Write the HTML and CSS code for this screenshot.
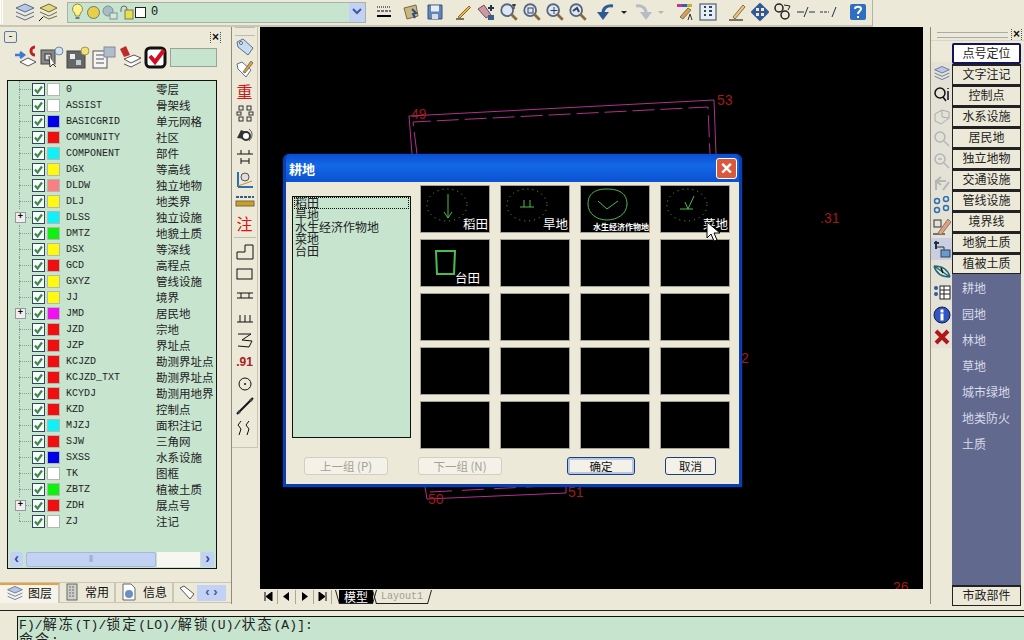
FILE: index.html
```html
<!DOCTYPE html>
<html lang="zh-CN">
<head>
    <meta charset="UTF-8">
    <title>耕地</title>
    <link rel="stylesheet" href="styles.css">
</head>
<body>
    <svg class="defs" width="0" height="0">
        <symbol id="i-check" viewBox="0 0 13 13"><path d="M3 6.5l2.5 3L10 3.5" fill="none" stroke="#3d8a4e" stroke-width="2.2"/></symbol>
        <symbol id="i-layers" viewBox="0 0 22 22"><path d="M2 7l9-4 9 4-9 4z" fill="#b9c7e6" stroke="#5a6a90"/><path d="M2 11l9 4 9-4M2 15l9 4 9-4" fill="none" stroke="#5a6a90"/></symbol>
        <symbol id="i-lens" viewBox="0 0 22 22"><circle cx="9" cy="9" r="6.5" fill="#dfe7f4" stroke="#56657f" stroke-width="2"/><path d="M13.5 13.5l6 6" stroke="#8a6a3a" stroke-width="3"/></symbol>
    </svg>

    <div class="toolbar">
        <div class="grip"></div>
        <span class="tb"><svg width="22" height="22"><use href="#i-layers"/></svg></span>
        <span class="tb"><svg width="22" height="22" viewBox="0 0 22 22"><path d="M3 7l9-4 8 4-8 4z" fill="#e6d77c" stroke="#6b6a3a"/><path d="M3 11l9 4 8-4M6 15l6 3 8-3" fill="none" stroke="#6b6a3a"/><path d="M2 20l4-4" stroke="#000"/></svg></span>
        <div class="combo">
            <svg width="15" height="18" viewBox="0 0 15 18"><path d="M7.5 1a5 5 0 0 0-3 9l1 3h4l1-3a5 5 0 0 0-3-9z" fill="#fff38a" stroke="#8a8a50"/><path d="M5.5 15h4" stroke="#777" stroke-width="2"/></svg>
            <svg width="15" height="15" viewBox="0 0 15 15"><circle cx="7.5" cy="7.5" r="6" fill="#e8cf45" stroke="#777"/></svg>
            <svg width="16" height="15" viewBox="0 0 16 15"><circle cx="6" cy="6" r="5" fill="#a9bcc4" stroke="#7f919a"/><rect x="8" y="8" width="7" height="6" fill="#d6e6df" stroke="#7f919a"/></svg>
            <svg width="15" height="15" viewBox="0 0 15 15"><path d="M2 7V4a3 3 0 0 1 6 0v3" fill="none" stroke="#666"/><rect x="6" y="5" width="8" height="9" fill="#e8e045" stroke="#777"/></svg>
            <span class="combo-swatch"></span>
            <span class="combo-text">0</span>
            <span class="combo-btn"><svg width="12" height="8" viewBox="0 0 12 8"><path d="M2 1l4 4 4-4" fill="none" stroke="#3b5aa0" stroke-width="2"/></svg></span>
        </div>
        <span class="tb"><svg width="18" height="14" viewBox="0 0 18 14"><path d="M2 2h14" stroke="#000" stroke-dasharray="1 1"/><path d="M2 6h14" stroke="#000" stroke-dasharray="3 1"/><path d="M2 11h14" stroke="#000" stroke-width="2"/></svg></span>
        <span class="tb tb-first"><svg width="20" height="20" viewBox="0 0 20 20"><path d="M2 6l12-3 2 11-11 3z" fill="#c8b880" stroke="#776a40"/><path d="M10 7l4 4-3 1 2 4" fill="none" stroke="#2d4d80" stroke-width="2"/></svg></span>
        <span class="tb"><svg width="18" height="18" viewBox="0 0 18 18"><path d="M2 2h14v14H2z" fill="#5f86b8" stroke="#39507a"/><rect x="5" y="2.500" width="8" height="6" fill="#e9eef5"/><rect x="6" y="11" width="6" height="5" fill="#d8dde5"/></svg></span>
        <span class="tb tb-first"><svg width="20" height="20" viewBox="0 0 20 20"><path d="M3 17h8" stroke="#000"/><path d="M5 15L16 4l1.500 1.500L7 16z" fill="#e2b94a" stroke="#8a6a20"/></svg></span>
        <span class="tb"><svg width="20" height="20" viewBox="0 0 20 20"><path d="M2 7l8 9 5-3-7-10z" fill="#c99aa4" stroke="#7a4a55"/><path d="M15 3v6M12 6h6" stroke="#234" stroke-width="2"/><rect x="12" y="13" width="6" height="5" fill="#3a5f8a"/></svg></span>
        <span class="tb"><svg width="20" height="20"><use href="#i-lens"/><path d="M15 2v5M13 3h4" stroke="#000"/></svg></span>
        <span class="tb"><svg width="20" height="20"><use href="#i-lens"/><rect x="6" y="6" width="5" height="5" fill="none" stroke="#345"/></svg></span>
        <span class="tb"><svg width="20" height="20"><use href="#i-lens"/><path d="M9 5v7M5.500 8.500h7" stroke="#345"/></svg></span>
        <span class="tb"><svg width="20" height="20"><use href="#i-lens"/><path d="M5 9l4-3 2 4" fill="none" stroke="#345" stroke-width="2"/></svg></span>
        <span class="tb tb-first"><svg width="20" height="20" viewBox="0 0 20 20"><path d="M7 11C7 6 11 3 17 4" fill="none" stroke="#2f5a96" stroke-width="3"/><path d="M1 10h12l-6 8z" fill="#2f5a96"/></svg></span>
        <span class="tb-drop"></span>
        <span class="tb"><svg width="20" height="20" viewBox="0 0 20 20"><path d="M13 11C13 6 9 3 3 4" fill="none" stroke="#b6bcc4" stroke-width="3"/><path d="M19 10H7l6 8z" fill="#b6bcc4"/></svg></span>
        <span class="tb-drop tb-drop-off"></span>
        <span class="tb tb-first"><svg width="20" height="20" viewBox="0 0 20 20"><rect x="2" y="2" width="5" height="3" fill="#c03a8a"/><rect x="7" y="2" width="5" height="3" fill="#3a5ac0"/><rect x="12" y="2" width="5" height="3" fill="#c8b030"/><path d="M5 15l8-9 3 2-8 9z" fill="#d8a050" stroke="#775"/><path d="M13 18l2-6 2 6" fill="none" stroke="#333"/></svg></span>
        <span class="tb"><svg width="18" height="18" viewBox="0 0 18 18"><rect x="1" y="1" width="16" height="16" fill="#e8eef5" stroke="#345"/><path d="M5 4h2M10 4h3M5 8h2M10 8h3M5 12h2M10 12h3" stroke="#345" stroke-width="2"/></svg></span>
        <span class="tb tb-wide"><svg width="20" height="20" viewBox="0 0 20 20"><path d="M2 18h14" stroke="#000"/><path d="M6 15L16 3l2 2L8 17z" fill="#e6c68a" stroke="#8a7040"/></svg></span>
        <span class="tb"><svg width="18" height="18" viewBox="0 0 18 18"><path d="M9 1v16M1 9h16M9 1L6 4h6zM9 17l-3-3h6zM1 9l3-3v6zM17 9l-3-3v6z" stroke="#2f5a96" fill="#2f5a96" stroke-width="2"/></svg></span>
        <span class="tb"><svg width="20" height="20" viewBox="0 0 20 20"><circle cx="6" cy="6" r="4" fill="none" stroke="#222" stroke-width="1.500"/><circle cx="12" cy="13" r="4" fill="none" stroke="#222" stroke-width="1.500"/><path d="M11 3l6 1-2 4" fill="none" stroke="#222"/></svg></span>
        <span class="tb"><svg width="20" height="14" viewBox="0 0 20 14"><path d="M1 7h7M13 7h6" stroke="#234"/><path d="M8 12l4-10" stroke="#234"/></svg></span>
        <span class="tb"><svg width="20" height="14" viewBox="0 0 20 14"><path d="M1 7h9" stroke="#234" stroke-dasharray="3 1"/><path d="M13 12l4-10" stroke="#234"/></svg></span>
        <span class="tb tb-wide"><svg width="18" height="18" viewBox="0 0 18 18"><rect x="1" y="1" width="16" height="16" rx="2" fill="#2f6fc0"/><path d="M6 6c0-3 6-3 6 0 0 2-3 2-3 5M9 13v2" fill="none" stroke="#fff" stroke-width="2"/></svg></span>
    </div>

    <div class="main">
        <aside class="palette">
            <div class="palette-title">
                <span class="mini-btn">-</span>
                <span class="close-x">×</span>
            </div>
            <div class="palette-tools">
                <svg width="24" height="24" viewBox="0 0 24 24"><path d="M1 10h8M6 7l4 3-4 3" stroke="#3a7ad0" stroke-width="2.500" fill="none"/><path d="M6 17l8-4 8 4-8 4z" fill="#fff" stroke="#555"/><path d="M21 2a4 4 0 1 0 0 8" fill="none" stroke="#c02020" stroke-width="3"/></svg>
                <svg width="24" height="24" viewBox="0 0 24 24"><rect x="1" y="5" width="14" height="14" fill="#888" stroke="#444"/><rect x="5" y="9" width="6" height="6" fill="#ddd" stroke="#333"/><path d="M9 11l1 11 3-3 3 3" fill="#fff" stroke="#333"/><circle cx="19" cy="6" r="4" fill="#cfe2f8" stroke="#789"/></svg>
                <svg width="24" height="24" viewBox="0 0 24 24"><rect x="1" y="6" width="18" height="17" fill="#666" stroke="#444"/><rect x="4" y="9" width="5" height="5" fill="#eee"/><rect x="10" y="15" width="5" height="5" fill="#bcd"/><circle cx="19" cy="6" r="4" fill="#f4e26a" stroke="#997"/></svg>
                <svg width="24" height="24" viewBox="0 0 24 24"><rect x="1" y="6" width="14" height="17" fill="#f4f4f4" stroke="#555"/><path d="M4 10h8M4 14h8M4 18h8" stroke="#555"/><rect x="12" y="2" width="11" height="10" fill="#aebccc" stroke="#889"/></svg>
                <svg width="24" height="24" viewBox="0 0 24 24"><path d="M2 4l6-3 4 9-6 2z" fill="#c02a2a"/><path d="M6 14l10-4 7 3-10 5zM6 19l7 3 10-5" fill="#fff" stroke="#555"/></svg>
                <svg width="24" height="24" viewBox="0 0 24 24"><rect x="2" y="3" width="19" height="19" rx="4" fill="#fff" stroke="#111" stroke-width="3"/><path d="M6 11l5 6 9-12" fill="none" stroke="#d01020" stroke-width="4"/></svg>
                <span class="palette-input"></span>
            </div>
            <div class="layer-box">
                <div class="layer-list">
                    <div class="layer"><span class="tree"></span><span class="chk"><svg width="13" height="13"><use href="#i-check"/></svg></span><span class="sw c-white"></span><span class="name">0</span><span class="desc">零层</span></div>
                    <div class="layer"><span class="tree"></span><span class="chk"><svg width="13" height="13"><use href="#i-check"/></svg></span><span class="sw c-white"></span><span class="name">ASSIST</span><span class="desc">骨架线</span></div>
                    <div class="layer"><span class="tree"></span><span class="chk"><svg width="13" height="13"><use href="#i-check"/></svg></span><span class="sw c-blue"></span><span class="name">BASICGRID</span><span class="desc">单元网格</span></div>
                    <div class="layer"><span class="tree"></span><span class="chk"><svg width="13" height="13"><use href="#i-check"/></svg></span><span class="sw c-red"></span><span class="name">COMMUNITY</span><span class="desc">社区</span></div>
                    <div class="layer"><span class="tree"></span><span class="chk"><svg width="13" height="13"><use href="#i-check"/></svg></span><span class="sw c-cyan"></span><span class="name">COMPONENT</span><span class="desc">部件</span></div>
                    <div class="layer"><span class="tree"></span><span class="chk"><svg width="13" height="13"><use href="#i-check"/></svg></span><span class="sw c-yellow"></span><span class="name">DGX</span><span class="desc">等高线</span></div>
                    <div class="layer"><span class="tree"></span><span class="chk"><svg width="13" height="13"><use href="#i-check"/></svg></span><span class="sw c-pink"></span><span class="name">DLDW</span><span class="desc">独立地物</span></div>
                    <div class="layer"><span class="tree"></span><span class="chk"><svg width="13" height="13"><use href="#i-check"/></svg></span><span class="sw c-yellow"></span><span class="name">DLJ</span><span class="desc">地类界</span></div>
                    <div class="layer"><span class="tree tree-plus"></span><span class="chk"><svg width="13" height="13"><use href="#i-check"/></svg></span><span class="sw c-cyan"></span><span class="name">DLSS</span><span class="desc">独立设施</span></div>
                    <div class="layer"><span class="tree"></span><span class="chk"><svg width="13" height="13"><use href="#i-check"/></svg></span><span class="sw c-green"></span><span class="name">DMTZ</span><span class="desc">地貌土质</span></div>
                    <div class="layer"><span class="tree"></span><span class="chk"><svg width="13" height="13"><use href="#i-check"/></svg></span><span class="sw c-yellow"></span><span class="name">DSX</span><span class="desc">等深线</span></div>
                    <div class="layer"><span class="tree"></span><span class="chk"><svg width="13" height="13"><use href="#i-check"/></svg></span><span class="sw c-red"></span><span class="name">GCD</span><span class="desc">高程点</span></div>
                    <div class="layer"><span class="tree"></span><span class="chk"><svg width="13" height="13"><use href="#i-check"/></svg></span><span class="sw c-yellow"></span><span class="name">GXYZ</span><span class="desc">管线设施</span></div>
                    <div class="layer"><span class="tree"></span><span class="chk"><svg width="13" height="13"><use href="#i-check"/></svg></span><span class="sw c-yellow"></span><span class="name">JJ</span><span class="desc">境界</span></div>
                    <div class="layer"><span class="tree tree-plus"></span><span class="chk"><svg width="13" height="13"><use href="#i-check"/></svg></span><span class="sw c-magenta"></span><span class="name">JMD</span><span class="desc">居民地</span></div>
                    <div class="layer"><span class="tree"></span><span class="chk"><svg width="13" height="13"><use href="#i-check"/></svg></span><span class="sw c-red"></span><span class="name">JZD</span><span class="desc">宗地</span></div>
                    <div class="layer"><span class="tree"></span><span class="chk"><svg width="13" height="13"><use href="#i-check"/></svg></span><span class="sw c-red"></span><span class="name">JZP</span><span class="desc">界址点</span></div>
                    <div class="layer"><span class="tree"></span><span class="chk"><svg width="13" height="13"><use href="#i-check"/></svg></span><span class="sw c-red"></span><span class="name">KCJZD</span><span class="desc">勘测界址点</span></div>
                    <div class="layer"><span class="tree"></span><span class="chk"><svg width="13" height="13"><use href="#i-check"/></svg></span><span class="sw c-red"></span><span class="name">KCJZD_TXT</span><span class="desc">勘测界址点</span></div>
                    <div class="layer"><span class="tree"></span><span class="chk"><svg width="13" height="13"><use href="#i-check"/></svg></span><span class="sw c-red"></span><span class="name">KCYDJ</span><span class="desc">勘测用地界</span></div>
                    <div class="layer"><span class="tree"></span><span class="chk"><svg width="13" height="13"><use href="#i-check"/></svg></span><span class="sw c-red"></span><span class="name">KZD</span><span class="desc">控制点</span></div>
                    <div class="layer"><span class="tree"></span><span class="chk"><svg width="13" height="13"><use href="#i-check"/></svg></span><span class="sw c-cyan"></span><span class="name">MJZJ</span><span class="desc">面积注记</span></div>
                    <div class="layer"><span class="tree"></span><span class="chk"><svg width="13" height="13"><use href="#i-check"/></svg></span><span class="sw c-red"></span><span class="name">SJW</span><span class="desc">三角网</span></div>
                    <div class="layer"><span class="tree"></span><span class="chk"><svg width="13" height="13"><use href="#i-check"/></svg></span><span class="sw c-blue"></span><span class="name">SXSS</span><span class="desc">水系设施</span></div>
                    <div class="layer"><span class="tree"></span><span class="chk"><svg width="13" height="13"><use href="#i-check"/></svg></span><span class="sw c-white"></span><span class="name">TK</span><span class="desc">图框</span></div>
                    <div class="layer"><span class="tree"></span><span class="chk"><svg width="13" height="13"><use href="#i-check"/></svg></span><span class="sw c-green"></span><span class="name">ZBTZ</span><span class="desc">植被土质</span></div>
                    <div class="layer"><span class="tree tree-plus"></span><span class="chk"><svg width="13" height="13"><use href="#i-check"/></svg></span><span class="sw c-red"></span><span class="name">ZDH</span><span class="desc">展点号</span></div>
                    <div class="layer"><span class="tree tree-last"></span><span class="chk"><svg width="13" height="13"><use href="#i-check"/></svg></span><span class="sw c-white"></span><span class="name">ZJ</span><span class="desc">注记</span></div>
                </div>
                <div class="hscroll">
                    <span class="sb-btn">‹</span>
                    <span class="sb-thumb">⦀</span>
                    <span class="sb-track"></span>
                    <span class="sb-btn">›</span>
                </div>
            </div>
            <div class="palette-tabs">
                <span class="ptab ptab-on"><svg width="20" height="18"><use href="#i-layers"/></svg>图层</span>
                <span class="ptab"><svg width="14" height="18" viewBox="0 0 14 18"><rect x="2" y="1" width="10" height="16" fill="#cfcfc8" stroke="#666"/><path d="M4 4h6M4 7h6M4 10h6M4 13h6" stroke="#666" stroke-dasharray="2 1"/></svg>常用</span>
                <span class="ptab ptab-info"><svg width="16" height="18" viewBox="0 0 16 18"><path d="M2 1h8l4 4v12H2z" fill="#fff" stroke="#666"/><circle cx="8" cy="11" r="4" fill="#6a90c0"/></svg>信息</span>
                <span class="ptab ptab-clip"><svg width="16" height="16" viewBox="0 0 16 16"><path d="M1 4l4-2 10 8-4 5z" fill="#fff" stroke="#555"/></svg></span>
                <span class="ptab-arrows">‹ ›</span>
            </div>
        </aside>

        <nav class="vtools">
            <span class="vgrip"></span>
            <span class="vt"><svg width="20" height="20" viewBox="0 0 20 20"><path d="M2 5l6-3 10 9-5 7L3 10z" fill="#c7dcf0" stroke="#5a7090"/><circle cx="6" cy="6" r="1.500" fill="#fff" stroke="#567"/></svg></span>
            <span class="vt"><svg width="20" height="20" viewBox="0 0 20 20"><path d="M2 5l5-2 9 8-5 7L3 10z" fill="#fff" stroke="#5a7090"/><path d="M8 13l8-11 2 2-8 10z" fill="#d8a040" stroke="#875"/></svg></span>
            <span class="vt vt-red">重</span>
            <span class="vt"><svg width="18" height="18" viewBox="0 0 18 18" fill="none" stroke="#333"><rect x="3" y="2" width="4" height="4"/><rect x="11" y="2" width="4" height="4"/><rect x="1" y="8" width="4" height="3"/><rect x="13" y="8" width="4" height="3"/><rect x="3" y="13" width="4" height="4"/><rect x="11" y="13" width="4" height="4"/></svg></span>
            <span class="vt"><svg width="20" height="18" viewBox="0 0 20 18"><path d="M2 12l4-8 5 2-1 7z" fill="#333"/><circle cx="11" cy="10" r="4" fill="#fff" stroke="#333" stroke-width="2"/><path d="M14 3c4 3 4 8 0 12" fill="none" stroke="#555"/></svg></span>
            <span class="vt"><svg width="18" height="16" viewBox="0 0 18 16" fill="none" stroke="#111"><path d="M1 5h16M5 1v4M13 1v4M5 9v6M13 9v6M5 12h8"/></svg></span>
            <span class="vt"><svg width="20" height="20" viewBox="0 0 20 20"><path d="M3 18V3M3 18h15" stroke="#2f6fa8" stroke-width="2" fill="none"/><circle cx="10" cy="8" r="4" fill="#ddd" stroke="#555"/><path d="M3 17l14-5" stroke="#c09030"/></svg></span>
            <span class="vt"><svg width="20" height="14" viewBox="0 0 20 14"><path d="M1 3h18" stroke="#3a5a8a" stroke-width="2" stroke-dasharray="3 1"/><rect x="1" y="7" width="18" height="5" fill="#c8a020" stroke="#765"/></svg></span>
            <span class="vt vt-red">注</span>
            <span class="vsep"></span>
            <span class="vt"><svg width="18" height="16" viewBox="0 0 18 16" fill="none" stroke="#111"><path d="M1 15V8h8V1h8v14z"/></svg></span>
            <span class="vt"><svg width="18" height="12" viewBox="0 0 18 12"><rect x="1" y="1" width="15" height="10" fill="none" stroke="#111"/></svg></span>
            <span class="vt"><svg width="18" height="12" viewBox="0 0 18 12" fill="none" stroke="#111"><path d="M1 3h16M1 8h16M5 3v5M13 3v5"/></svg></span>
            <span class="vt"><svg width="18" height="12" viewBox="0 0 18 12" fill="none" stroke="#111"><path d="M1 10h16M4 3v7M9 3v7M14 3v7"/></svg></span>
            <span class="vt"><svg width="18" height="18" viewBox="0 0 18 18" fill="none" stroke="#111"><path d="M2 3h13l-9 6 10 1-3 6-11-1"/></svg></span>
            <span class="vt vt-num">.91</span>
            <span class="vt"><svg width="16" height="16" viewBox="0 0 16 16"><circle cx="8" cy="8" r="6" fill="none" stroke="#111"/><circle cx="8" cy="8" r="1" fill="#111"/></svg></span>
            <span class="vt"><svg width="18" height="18" viewBox="0 0 18 18"><path d="M1 17L17 1" stroke="#111" stroke-width="2"/><circle cx="3" cy="15" r="1.500" fill="#345"/><circle cx="15" cy="3" r="1.500" fill="#345"/></svg></span>
            <span class="vt"><svg width="16" height="16" viewBox="0 0 16 16" fill="none" stroke="#111"><path d="M4 1L1 5l3 4-2 6M12 1L9 5l3 4-2 6"/></svg></span>
        </nav>

        <section class="center">
            <div class="canvas">
                <svg class="drawing" width="663" height="562" viewBox="260 27 663 562">
                    <path d="M412 154l-3-38 305-16 2 54" fill="none" stroke="#b03090"/>
                    <path d="M417 154l-4-32 295-15 2 47" fill="none" stroke="#b03090" stroke-dasharray="22 6"/>
                    <path d="M425 487l2 12 139-6v-6" fill="none" stroke="#b03090"/>
                    <path d="M430 492l136-7" fill="none" stroke="#b03090" stroke-dasharray="22 10"/>
                    <text x="411" y="119">49</text>
                    <text x="717" y="105">53</text>
                    <text x="820" y="223">.31</text>
                    <text x="741" y="363">2</text>
                    <text x="893" y="592">26</text>
                    <text x="428" y="504">50</text>
                    <text x="568" y="497">51</text>
                </svg>
                <div class="dialog">
                    <div class="dialog-title">
                        <span>耕地</span>
                        <span class="dialog-close">×</span>
                    </div>
                    <div class="dialog-body">
                        <div class="dialog-top">
                            <ul class="kind-list">
                                <li class="kind-on">稻田</li>
                                <li>旱地</li>
                                <li>水生经济作物地</li>
                                <li>菜地</li>
                                <li>台田</li>
                            </ul>
                            <div class="tiles">
                                <div class="tile">
                                    <svg width="68" height="46" viewBox="0 0 68 46" fill="none" stroke="#4cbc50"><ellipse cx="26" cy="19" rx="20" ry="16" stroke-dasharray="1 4"/><path d="M27 8v24M23 26l4 6 4-6"/></svg>
                                    <span class="tile-label">稻田</span>
                                </div>
                                <div class="tile">
                                    <svg width="68" height="46" viewBox="0 0 68 46" fill="none" stroke="#4cbc50"><ellipse cx="26" cy="19" rx="20" ry="16" stroke-dasharray="1 4"/><path d="M19 21h14M23 14v7M29 14v7"/></svg>
                                    <span class="tile-label">旱地</span>
                                </div>
                                <div class="tile">
                                    <svg width="68" height="46" viewBox="0 0 68 46" fill="none" stroke="#4cbc50"><path d="M7 18C7 5 18 3 26 3s20 2 20 15c0 10-10 16-20 16S7 28 7 18z"/><path d="M17 15l9 8 11-8"/></svg>
                                    <span class="tile-label tile-label-small">水生经济作物地</span>
                                </div>
                                <div class="tile">
                                    <svg width="68" height="46" viewBox="0 0 68 46" fill="none" stroke="#4cbc50"><ellipse cx="26" cy="19" rx="20" ry="16" stroke-dasharray="1 4"/><path d="M19 23h13M24 16l3 7 6-13"/></svg>
                                    <span class="tile-label">菜地</span>
                                </div>
                                <div class="tile">
                                    <svg width="68" height="46" viewBox="0 0 68 46" fill="none" stroke="#4cbc50" stroke-width="2"><path d="M15 11h19l-1 23H16z"/></svg>
                                    <span class="tile-label tile-label-left">台田</span>
                                </div>
                                <div class="tile"></div>
                                <div class="tile"></div>
                                <div class="tile"></div>
                                <div class="tile"></div>
                                <div class="tile"></div>
                                <div class="tile"></div>
                                <div class="tile"></div>
                                <div class="tile"></div>
                                <div class="tile"></div>
                                <div class="tile"></div>
                                <div class="tile"></div>
                                <div class="tile"></div>
                                <div class="tile"></div>
                                <div class="tile"></div>
                                <div class="tile"></div>
                            </div>
                        </div>
                        <div class="dialog-buttons">
                            <button class="dbtn dbtn-off dbtn-prev">上一组 (P)</button>
                            <button class="dbtn dbtn-off dbtn-next">下一组 (N)</button>
                            <button class="dbtn dbtn-ok">确定</button>
                            <button class="dbtn dbtn-cancel">取消</button>
                        </div>
                    </div>
                    <svg class="cursor" width="16" height="22" viewBox="0 0 16 22"><path d="M1 1v16l4-4 3 7 3-1-3-7h6z" fill="#fff" stroke="#000"/></svg>
                </div>
            </div>
            <div class="sheet-tabs">
                <span class="nav-btn"><svg width="9" height="9" viewBox="0 0 9 9"><path d="M1 0v9M8 0v9L2 4.500z" stroke="#000"/></svg></span>
                <span class="nav-btn"><svg width="9" height="9" viewBox="0 0 9 9"><path d="M7 0v9L1 4.500z"/></svg></span>
                <span class="nav-btn"><svg width="9" height="9" viewBox="0 0 9 9"><path d="M2 0v9l6-4.500z"/></svg></span>
                <span class="nav-btn"><svg width="9" height="9" viewBox="0 0 9 9"><path d="M8 0v9M1 0v9l6-4.500z" stroke="#000"/></svg></span>
                <span class="sheet sheet-on">模型</span>
                <span class="sheet">Layout1</span>
            </div>
        </section>

        <aside class="side">
            <div class="side-title"><span class="side-grip"></span><span class="close-x">×</span></div>
            <div class="side-body">
                <div class="side-icons">
                    <span class="si"><svg width="18" height="18"><use href="#i-layers"/></svg></span>
                    <span class="si"><svg width="18" height="18" viewBox="0 0 18 18" fill="none" stroke="#111" stroke-width="1.500"><circle cx="7" cy="7" r="5"/><path d="M10 11l3 4M15 5v9M15 2v1"/></svg></span>
                    <span class="si"><svg width="18" height="18" viewBox="0 0 18 18" fill="none" stroke="#aaa"><path d="M2 6l7-4 7 2v6l-8 6-6-3zM9 2v7l7 1"/></svg></span>
                    <span class="si"><svg width="18" height="18" viewBox="0 0 18 18" fill="none" stroke="#b5b5b5" stroke-width="1.500"><circle cx="7" cy="7" r="5"/><path d="M11 11l5 5"/></svg></span>
                    <span class="si"><svg width="18" height="18" viewBox="0 0 18 18" fill="none" stroke="#b5b5b5" stroke-width="1.500"><circle cx="7" cy="7" r="5"/><path d="M5 7h4M11 11l5 5"/></svg></span>
                    <span class="si"><svg width="18" height="18" viewBox="0 0 18 18" fill="none" stroke="#b5b5b5" stroke-width="2"><path d="M3 16V7h10M8 3L3 7l5 4M16 8l-6 8"/></svg></span>
                    <span class="si"><svg width="18" height="18" viewBox="0 0 18 18" fill="none" stroke="#2f6fb0" stroke-width="1.500"><circle cx="4" cy="5" r="2.500"/><circle cx="13" cy="3" r="2.500"/><circle cx="4" cy="14" r="2.500"/><circle cx="13" cy="12" r="2.500"/></svg></span>
                    <span class="si"><svg width="20" height="20" viewBox="0 0 20 20"><rect x="2" y="3" width="7" height="7" fill="none" stroke="#333"/><path d="M1 17h12" stroke="#000"/><path d="M6 16L16 2l3 3L9 18z" fill="#e0a080" stroke="#876"/></svg></span>
                    <span class="si si-on"><svg width="18" height="18" viewBox="0 0 18 18"><path d="M3 1v8M1 3h5" stroke="#234" stroke-width="2"/><path d="M3 7h8v4" fill="none" stroke="#234"/><rect x="8" y="10" width="9" height="7" fill="#6a9ad0" stroke="#345"/></svg></span>
                    <span class="si"><svg width="20" height="18" viewBox="0 0 20 18" fill="none" stroke="#1f6a7a" stroke-width="1.500"><path d="M2 4l16 11M2 4c2 7 8 11 16 11M2 4c8 0 14 4 16 11"/><path d="M9 6l2 5" stroke="#111"/></svg></span>
                    <span class="si"><svg width="18" height="18" viewBox="0 0 18 18"><circle cx="3" cy="4" r="2" fill="#2f5a96"/><circle cx="3" cy="10" r="2" fill="#2f5a96"/><rect x="7" y="2" width="10" height="13" fill="#fff" stroke="#222"/><path d="M7 6h10M7 10h10M11 2v13" stroke="#222"/></svg></span>
                    <span class="si"><svg width="18" height="18" viewBox="0 0 18 18"><circle cx="9" cy="9" r="8" fill="#2f55c8" stroke="#123"/><rect x="7.500" y="7.500" width="3" height="7" fill="#fff"/><rect x="7.500" y="3.500" width="3" height="3" fill="#fff"/></svg></span>
                    <span class="si"><svg width="16" height="16" viewBox="0 0 16 16"><path d="M2 2l12 12M14 2L2 14" stroke="#b01818" stroke-width="4"/></svg></span>
                </div>
                <div class="side-menu">
                    <span class="sbtn sbtn-on">点号定位</span>
                    <span class="sbtn">文字注记</span>
                    <span class="sbtn">控制点</span>
                    <span class="sbtn">水系设施</span>
                    <span class="sbtn">居民地</span>
                    <span class="sbtn">独立地物</span>
                    <span class="sbtn">交通设施</span>
                    <span class="sbtn">管线设施</span>
                    <span class="sbtn">境界线</span>
                    <span class="sbtn">地貌土质</span>
                    <span class="sbtn">植被土质</span>
                    <ul class="sub-list">
                        <li>耕地</li>
                        <li>园地</li>
                        <li>林地</li>
                        <li>草地</li>
                        <li>城市绿地</li>
                        <li>地类防火</li>
                        <li>土质</li>
                    </ul>
                    <span class="sbtn">市政部件</span>
                </div>
            </div>
        </aside>
    </div>

    <footer class="command">
        <div class="cmd-box">
            <div class="cmd-line">F)/<span class="cn">解冻</span>(T)/<span class="cn">锁定</span>(LO)/<span class="cn">解锁</span>(U)/<span class="cn">状态</span>(A)]:</div>
            <div class="cmd-line"><span class="cn">命令</span>:</div>
        </div>
    </footer>
</body>
</html>
```

FILE: styles.css
```css
* {
    margin: 0;
    padding: 0;
    box-sizing: border-box;
}

html, body {
    width: 1024px;
    height: 640px;
    overflow: hidden;
}

body {
    background-color: #ece9d8;
    font-family: "Noto Sans CJK SC", "Liberation Sans", sans-serif;
    font-size: 12px;
    color: #111;
    display: flex;
    flex-direction: column;
}

.defs {
    position: absolute;
}

/* top toolbar */
.toolbar {
    height: 27px;
    width: 873px;
    display: flex;
    align-items: center;
    flex-shrink: 0;
    border-right: 1px solid #b5b2a0;
    border-bottom: 2px solid #c9c6b4;
    padding-bottom: 1px;
}

.grip {
    width: 13px;
    height: 24px;
    border-left: 3px double #fff;
}

.tb {
    width: 23px;
    height: 22px;
    display: flex;
    align-items: center;
    justify-content: center;
    flex-shrink: 0;
}

.tb-first {
    margin-left: 5px;
}

.tb-wide {
    margin-left: 6px;
}

.tb-drop {
    width: 14px;
    height: 22px;
    position: relative;
}

.tb-drop::after {
    content: "";
    position: absolute;
    left: 4px;
    top: 10px;
    border: 3px solid transparent;
    border-top-color: #222;
}

.tb-drop-off::after {
    border-top-color: #b5b5b5;
}

.combo {
    width: 299px;
    height: 21px;
    margin: 0 6px 0 8px;
    background-color: #c7e4cf;
    border: 1px solid #a5b2a8;
    display: flex;
    align-items: center;
    gap: 1px;
    padding-left: 2px;
    flex-shrink: 0;
}

.combo-swatch {
    width: 11px;
    height: 11px;
    background-color: #fff;
    border: 1px solid #222;
}

.combo-text {
    font-family: "Liberation Mono", monospace;
    font-size: 12px;
    margin-left: 4px;
    flex: 1;
}

.combo-btn {
    width: 16px;
    height: 19px;
    background-color: #c3d1f3;
    display: flex;
    align-items: center;
    justify-content: center;
}

/* layout */
.main {
    flex: 1;
    display: flex;
    min-height: 0;
}

.palette {
    width: 232px;
    display: flex;
    flex-direction: column;
    border-right: 1px solid #8f8c7c;
    flex-shrink: 0;
}

.palette-title {
    height: 17px;
    display: flex;
    justify-content: space-between;
    align-items: center;
    padding: 3px 10px 0 4px;
}

.mini-btn {
    width: 13px;
    height: 12px;
    border: 1px solid #5c7aa8;
    border-radius: 2px;
    font-size: 10px;
    line-height: 9px;
    text-align: center;
    font-family: "Liberation Mono", monospace;
}

.close-x {
    width: 11px;
    height: 11px;
    font: bold 12px/10px "Liberation Sans", sans-serif;
    text-align: center;
    border-left: 1px dotted #555;
    border-right: 1px dotted #555;
}

.palette-tools {
    height: 35px;
    display: flex;
    align-items: flex-start;
    padding: 1px 0 0 14px;
    gap: 1px;
}

.palette-tools svg {
    width: 24px;
    margin-right: 1px;
}

.palette-input {
    width: 47px;
    height: 19px;
    background-color: #c7e4cf;
    border: 1px solid #98a39b;
    margin-top: 3px;
    flex-shrink: 0;
}

.layer-box {
    width: 210px;
    height: 489px;
    margin: 1px 0 0 7px;
    background-color: #c7e4cf;
    border: 1px solid #111;
    display: flex;
    flex-direction: column;
    overflow: hidden;
}

.layer-list {
    flex: 1;
}

.layer {
    height: 16px;
    display: flex;
    align-items: center;
    white-space: nowrap;
    overflow: hidden;
}

.tree {
    width: 23px;
    height: 16px;
    flex-shrink: 0;
    position: relative;
}

/* dotted tree lines */
.tree::before {
    content: "";
    position: absolute;
    left: 11px;
    top: 0;
    height: 16px;
    border-left: 1px dotted #8d9a92;
}

.tree::after {
    content: "";
    position: absolute;
    left: 11px;
    top: 8px;
    width: 12px;
    border-top: 1px dotted #8d9a92;
}

.tree-last::before {
    height: 8px;
}

.tree-plus::before {
    content: "+";
    left: 7px;
    top: 3px;
    width: 9px;
    height: 9px;
    border: 1px solid #999;
    background-color: #eee;
    color: #000;
    font: bold 9px/7px "Liberation Sans", sans-serif;
    text-align: center;
    z-index: 1;
}

.chk {
    width: 13px;
    height: 13px;
    margin: 0 2px 0 1px;
    background-color: #f6fbf7;
    border: 1px solid #2a4a5a;
    display: flex;
    flex-shrink: 0;
}

.chk svg {
    margin: -1px;
}

.sw {
    width: 13px;
    height: 13px;
    border: 1px solid #b4b8ac;
    flex-shrink: 0;
}

.c-white { background-color: #fff; }
.c-blue { background-color: #0000e8; }
.c-red { background-color: #ee1010; }
.c-cyan { background-color: #10f0f8; }
.c-yellow { background-color: #fff810; }
.c-pink { background-color: #f88080; }
.c-green { background-color: #10f010; }
.c-magenta { background-color: #f010f0; }

.name {
    width: 90px;
    margin-left: 6px;
    font-family: "Liberation Mono", monospace;
    font-size: 10px;
    color: #222;
    flex-shrink: 0;
}

.desc {
    font-size: 11.500px;
    color: #222;
}

.hscroll {
    height: 15px;
    margin: 0 2px 1px;
    display: flex;
    align-items: stretch;
    gap: 1px;
}

.sb-btn {
    width: 13px;
    background-color: #c3d1f3;
    color: #2b4a90;
    font: bold 14px/12px "Liberation Sans", sans-serif;
    text-align: center;
    border-radius: 2px;
}

.sb-thumb {
    width: 130px;
    margin-left: 2px;
    background-color: #c3d1f3;
    border: 1px solid #a7b8e0;
    border-radius: 2px;
    color: #8299c8;
    font-size: 9px;
    line-height: 12px;
    text-align: center;
}

.sb-track {
    flex: 1;
    background-color: #f7f7f2;
}

.palette-tabs {
    margin-top: 13px;
    height: 21px;
    display: flex;
    align-items: center;
    position: relative;
    border-top: 1px solid #c9c6b4;
    border-bottom: 1px solid #c9c6b4;
}

.ptab {
    height: 20px;
    width: 56px;
    display: flex;
    align-items: center;
    gap: 6px;
    padding: 0 0 2px 5px;
    border-right: 2px solid #c9c6b4;
    flex-shrink: 0;
}

.ptab-on {
    width: 60px;
    background-color: #f6f4ea;
    border-top: 2px solid #e8a040;
    gap: 3px;
}

.ptab-info {
    width: 58px;
}

.ptab-clip {
    width: 23px;
    border-right: 0;
}

.ptab-arrows {
    width: 29px;
    height: 16px;
    background-color: #c3d1f3;
    color: #3a5aa0;
    font: bold 13px/14px "Liberation Sans", sans-serif;
    text-align: center;
}

.vtools {
    width: 26px;
    height: 421px;
    display: flex;
    flex-direction: column;
    align-items: center;
    border-bottom: 1px solid #c9c6b4;
    border-right: 1px solid #c9c6b4;
    flex-shrink: 0;
}

.vgrip {
    width: 20px;
    height: 9px;
    border-top: 1px solid #bbb;
    border-bottom: 1px solid #bbb;
}

.vt {
    height: 22px;
    width: 24px;
    display: flex;
    align-items: center;
    justify-content: center;
    flex-shrink: 0;
}

.vt-red {
    color: #d01818;
    font-size: 16px;
}

.vt-num {
    color: #a82020;
    font: bold 12px "Liberation Sans", sans-serif;
}

.vsep {
    width: 22px;
    height: 7px;
    flex-shrink: 0;
    background: linear-gradient(#c2bfad, #c2bfad) 0 3px / 22px 1px no-repeat;
}

.center {
    width: 666px;
    margin-left: 2px;
    flex-shrink: 0;
    display: flex;
    flex-direction: column;
}

.canvas {
    width: 663px;
    height: 562px;
    background-color: #000;
    position: relative;
    overflow: hidden;
}

.drawing {
    position: absolute;
    left: 0;
    top: 0;
}

.drawing text {
    font: 14px "Liberation Sans", sans-serif;
    fill: #a01a1a;
}

/* dialog */
.dialog {
    position: absolute;
    left: 23px;
    top: 127px;
    width: 459px;
    height: 333px;
    background-color: #0a50c8;
    border: 3px solid #0a3fb0;
    border-top: 0;
    border-radius: 6px 6px 0 0;
    box-shadow: 0 0 2px #1028a0;
}

.dialog-title {
    height: 28px;
    padding: 0 2px 0 3px;
    display: flex;
    align-items: center;
    justify-content: space-between;
    color: #fff;
    font-size: 13px;
    font-weight: bold;
    background: linear-gradient(#0a4fd0, #1468e8 40%, #0a52d0);
    border-radius: 6px 6px 0 0;
}

.dialog-close {
    width: 21px;
    height: 21px;
    background-color: #d8593c;
    border: 1px solid #fff;
    border-radius: 3px;
    font: bold 20px/18px "Liberation Sans", sans-serif;
    text-align: center;
}

.dialog-body {
    height: 302px;
    background-color: #ece9d8;
    display: flex;
    flex-direction: column;
}

.dialog-top {
    display: flex;
    height: 268px;
    padding: 3px 9px 0 6px;
    gap: 9px;
}

.kind-list {
    list-style: none;
    width: 120px;
    height: 242px;
    margin-top: 11px;
    background-color: #c7e4cf;
    border: 1px solid #111;
    font-size: 12px;
    line-height: 12px;
    padding: 0 2px;
    color: #222;
}

.kind-list li {
    height: 12px;
}

.kind-on {
    outline: 1px dotted #111;
    outline-offset: -1px;
    margin: 0 -1px;
    padding: 0 1px;
}

.tiles {
    display: grid;
    grid-template-columns: repeat(4, 70px);
    grid-auto-rows: 48px;
    column-gap: 10px;
    row-gap: 6px;
}

.tile {
    background-color: #000;
    border: 1px solid #a6a396;
    position: relative;
}

.tile-label {
    position: absolute;
    right: 1px;
    bottom: 1px;
    color: #fff;
    font-size: 12.500px;
    line-height: 15px;
}

.tile-label-left {
    right: 9px;
}

.tile-label-small {
    right: 0;
    bottom: 0;
    font-size: 8px;
    font-weight: bold;
    line-height: 10px;
}

.dialog-buttons {
    height: 18px;
    position: relative;
    display: flex;
    padding-left: 18px;
    margin-top: 7px;
}

.dbtn {
    height: 18px;
    font-family: inherit;
    font-size: 11.500px;
    line-height: 14px;
    background-color: #f3f1e8;
    border: 1px solid #1c3f78;
    border-radius: 3px;
    color: #111;
}

.dbtn-off {
    color: #a5a294;
    border-color: #d2cfc0;
    width: 84px;
}

.dbtn-next {
    margin-left: 30px;
}

.dbtn-ok {
    width: 68px;
    margin-left: 65px;
    box-shadow: inset 0 0 0 2px #b6c8ea;
}

.dbtn-cancel {
    width: 51px;
    margin-left: 30px;
}

.cursor {
    position: absolute;
    left: 420px;
    top: 67px;
}

/* sheet tabs */
.sheet-tabs {
    height: 15px;
    display: flex;
    align-items: center;
}

.nav-btn {
    width: 18px;
    height: 14px;
    display: flex;
    align-items: center;
    justify-content: center;
    border-right: 1px solid #aaa79a;
}

.sheet {
    font-family: "Liberation Mono", "Noto Sans CJK SC", monospace;
    font-size: 10px;
    color: #a09d90;
    height: 14px;
    line-height: 13px;
    padding: 0 5px;
    margin-left: 3px;
    position: relative;
    border-bottom: 1px solid #222;
}

.sheet::before,
.sheet::after {
    content: "";
    position: absolute;
    top: 0;
    width: 1px;
    height: 14px;
    background-color: #222;
}

.sheet::before {
    left: -2px;
    transform: skewX(16deg);
}

.sheet::after {
    right: -2px;
    transform: skewX(-16deg);
}

.sheet-on {
    font-family: "Noto Sans CJK SC", sans-serif;
    font-size: 12px;
    color: #fff;
    background-color: #000;
    margin-left: 7px;
}

/* right side */
.side {
    width: 94px;
    margin-left: 4px;
    flex-shrink: 0;
    border-left: 1px solid #8f8c7c;
    display: flex;
    flex-direction: column;
}

.side-title {
    height: 14px;
    display: flex;
    align-items: center;
    padding: 2px 2px 0 6px;
    gap: 3px;
    border-bottom: 1px solid #d8d5c4;
}

.side-grip {
    flex: 1;
    height: 6px;
    border-top: 1px solid #aaa;
    border-bottom: 1px solid #aaa;
}

.side-body {
    display: flex;
    padding-top: 2px;
}

.side-icons {
    width: 21px;
    padding-top: 19px;
    display: flex;
    flex-direction: column;
}

.si {
    height: 22px;
    width: 21px;
    display: flex;
    align-items: center;
    justify-content: center;
    background-color: #e4e2d6;
}

.si-on {
    background-color: #c9cfe0;
}

.side-menu {
    width: 69px;
    display: flex;
    flex-direction: column;
}

.sbtn {
    height: 21px;
    background-color: #ece9d8;
    border: 1px solid #222;
    border-top: 2px solid #222;
    text-align: center;
    line-height: 15px;
    font-size: 12px;
    color: #222;
    flex-shrink: 0;
}

.sbtn-on {
    background-color: #fff;
    border: 2px solid #14145a;
    border-radius: 2px;
    line-height: 15px;
}

.sub-list {
    list-style: none;
    height: 311px;
    background-color: #62698f;
    color: #d8dbe8;
    padding: 2px 0 0 10px;
    font-size: 12px;
}

.sub-list li {
    height: 26px;
    line-height: 24px;
}

/* command line */
.command {
    height: 36px;
    flex-shrink: 0;
    padding: 6px 0 0 0;
    background: linear-gradient(#222, #222) 0 6px / 100% 1px no-repeat;
}

.cmd-box {
    height: 30px;
    margin: 6px 0 0 17px;
    background-color: #c7e4cf;
    border-left: 1px solid #111;
    border-top: 1px solid #111;
    padding-left: 1px;
    overflow: hidden;
}

.cmd-line {
    font-family: "Liberation Mono", monospace;
    font-size: 13px;
    letter-spacing: 0.100px;
    line-height: 13px;
    color: #222;
    white-space: nowrap;
}

.cn {
    font-family: "Noto Sans CJK SC", sans-serif;
    font-size: 14px;
    letter-spacing: 2px;
}
```
